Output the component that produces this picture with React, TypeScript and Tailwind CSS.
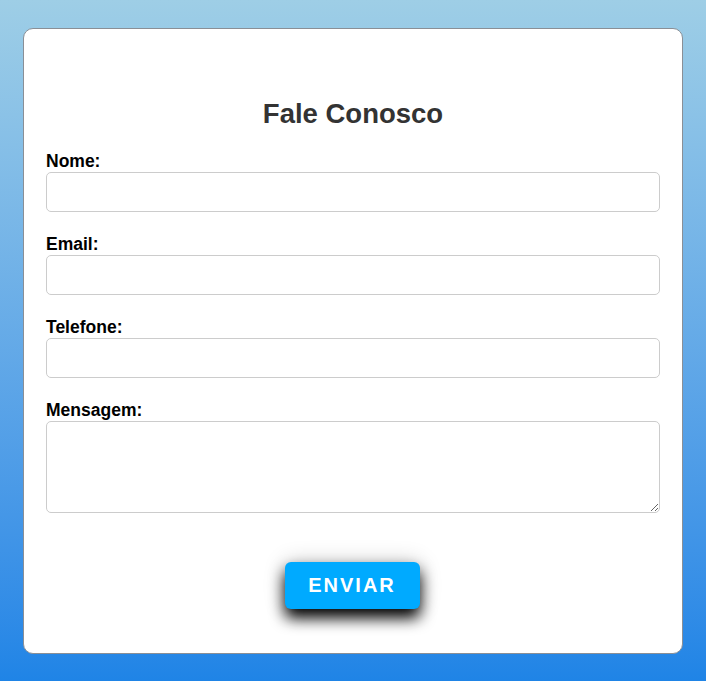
import React from 'react';

const fields = [
  { id: 'nome', label: 'Nome:', type: 'text' },
  { id: 'email', label: 'Email:', type: 'email' },
  { id: 'telefone', label: 'Telefone:', type: 'tel' },
];

export default function App() {
  return (
    <div className="min-h-[681px] w-full bg-gradient-to-b from-[#9ecee6] to-[#1f84e6] pt-[28px] pb-[27px] pl-[23px] font-['Liberation_Sans',Arial,sans-serif]">
      <form
        onSubmit={(e) => e.preventDefault()}
        className="w-[660px] h-[626px] bg-white border border-[#8a8f96] rounded-[10px] px-[22px] pt-[69px] flex flex-col"
      >
        <h2 className="text-center text-[27.5px] leading-[31px] font-bold text-[#333]">Fale Conosco</h2>

        <div className="mt-[22px] flex flex-col">
          {fields.map((f) => (
            <div key={f.id} className="flex flex-col mb-[22px]">
              <label htmlFor={f.id} className="text-[17.5px] leading-[20px] font-bold text-black mb-[1px]">
                {f.label}
              </label>
              <input
                id={f.id}
                type={f.type}
                className="h-[40px] w-full border border-[#ccc] rounded-[5px] px-2 outline-none"
              />
            </div>
          ))}
          <div className="flex flex-col">
            <label htmlFor="mensagem" className="text-[17.5px] leading-[20px] font-bold text-black mb-[1px]">
              Mensagem:
            </label>
            <textarea
              id="mensagem"
              className="h-[92px] w-full border border-[#ccc] rounded-[5px] px-2 outline-none"
            />
          </div>
        </div>

        <div className="mt-[49px] flex justify-center pr-[2px]">
          <button
            type="submit"
            className="w-[135px] h-[47px] rounded-[6px] bg-[#00aaff] text-white text-[20px] leading-[24px] font-bold tracking-[2px] pb-[2px] shadow-[0_9px_15px_rgba(0,0,0,1),0_0_22px_rgba(0,0,0,0.2)]"
          >
            ENVIAR
          </button>
        </div>
      </form>
    </div>
  );
}
